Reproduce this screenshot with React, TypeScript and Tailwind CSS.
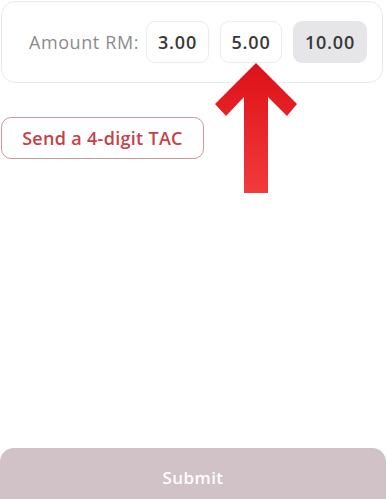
const amounts = [
  { value: '3.00', width: 'w-[63px]', active: false },
  { value: '5.00', width: 'w-[62px]', active: false },
  { value: '10.00', width: 'w-[74px]', active: true },
]

const font = { fontFamily: '"Open Sans", "Liberation Sans", sans-serif' }

// big red pointer drawn over the page
const UpArrow = () => (
  <svg
    className="absolute left-0 top-0"
    width="387"
    height="499"
    viewBox="0 0 387 499"
  >
    <defs>
      <linearGradient id="arrowFill" x1="0" y1="0" x2="0" y2="1">
        <stop offset="0" stopColor="#dd1118" />
        <stop offset="1" stopColor="#f23a3c" />
      </linearGradient>
    </defs>
    <polygon
      points="256,63 297,104 287,116 268,97 268,193 244,193 244,97 226,116 215,104"
      fill="url(#arrowFill)"
    />
  </svg>
)

export default function App() {
  return (
    <div className="relative flex h-[499px] w-[387px] flex-col overflow-hidden bg-white" style={font}>
      <div className="ml-[1px] mt-[1px] flex h-[82px] w-[382px] items-center justify-end gap-[11px] rounded-[14px] border border-[#ebebeb] pr-[15px]">
        <span className="mr-[-4px] text-[18px] tracking-[0.6px] text-[#8c8c8c]">Amount RM:</span>
        {amounts.map((a) => (
          <div
            key={a.value}
            className={`flex h-[42px] ${a.width} items-center justify-center rounded-[9px] text-[18px] font-semibold tracking-[0.8px] text-[#383838] ${
              a.active ? 'bg-[#e6e6e8]' : 'border border-[#ececec] bg-white'
            }`}
          >
            {a.value}
          </div>
        ))}
      </div>

      <button className="ml-[1px] mt-[34px] flex h-[42px] w-[203px] items-center justify-center rounded-[10px] border border-[#c99a9d] text-[18px] font-semibold tracking-[0.3px] text-[#c8404a]">
        Send a 4-digit TAC
      </button>

      <button className="mb-[-9px] mt-auto flex h-[60px] w-[386px] items-start justify-center rounded-t-[14px] bg-[#d1c2c7] pt-[17px] text-[17px] font-semibold tracking-[0.4px] text-white">
        Submit
      </button>

      <UpArrow />
    </div>
  )
}
